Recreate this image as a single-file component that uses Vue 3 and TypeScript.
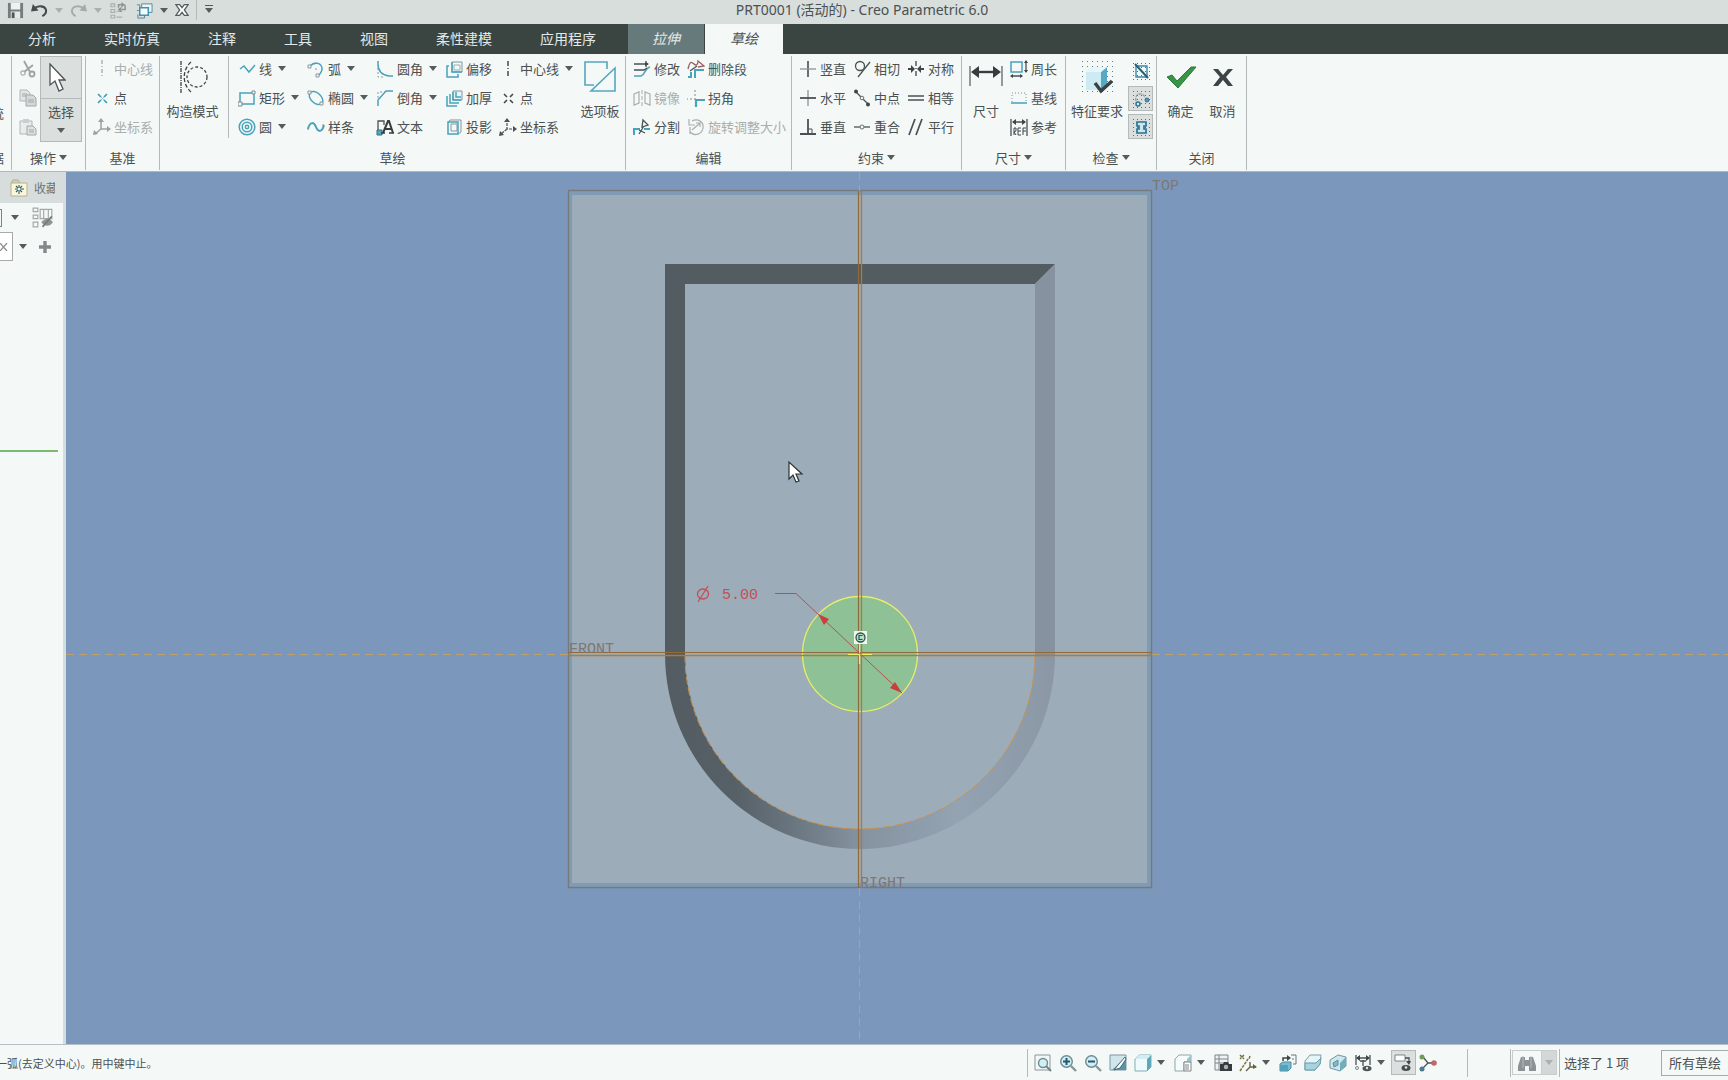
<script setup lang="ts">
interface Command {
  icon: string
  label: string
  menu?: boolean
  disabled?: boolean
}

const T = 'stroke="#48a3bc" fill="none" stroke-width="1.5"'
const D = 'stroke="#4a5254" fill="none" stroke-width="1.3"'
const G = 'stroke="#a9afaf" fill="none" stroke-width="1.2"'
const lens = '<path d="M12 12l5 5" stroke="#8b9598" stroke-width="2.4"/><circle cx="7.500" cy="7.500" r="5.800" fill="#d3eef2" stroke="#6d8b94" stroke-width="1.4"/>'
const dots = '<path d="M1 1.500h17M1 5.500h17M1 9.500h17M1 13.500h17M1 17.500h17" stroke="#3d7493" stroke-width="1" stroke-dasharray="1 3"/>'

/* Glyph bodies, drawn on an 18 by 18 grid */
const icons: Record<string, string> = {
  save: `<path d="M1 1h16v16h-16z" fill="#747c7d"/><path d="M4 1h10v7h-10z" fill="#eef1f0"/><path d="M4 10h10v7h-10z" fill="#e4e9e8"/><path d="M5 11h3v6h-3z" fill="#4e5657"/>`,
  undo: `<path d="M3 7c5-4 12-3 13 2c0 3-2 5-4 6" fill="none" stroke="#444b4c" stroke-width="2.2"/><path d="M0 10l2-8 6 7z" fill="#444b4c"/>`,
  redo: `<path d="M15 7c-5-4-12-3-13 2c0 3 2 5 4 6" fill="none" stroke="#a4abaa" stroke-width="2"/><path d="M18 10l-2-8-6 7z" fill="#a4abaa"/>`,
  regen: `<path d="M1 2h4v3h-4zM1 8h4v3h-4zM1 14h4v3h-4zM7 16h6M7 10h6" ${G}/><path d="M9 6v-3h4M16 3v5h-4" stroke="#8e9595" stroke-width="1.6" fill="none"/><path d="M12 0l4 3-4 3zM12 5v6l-4-3z" fill="#8e9595"/>`,
  windows: `<path d="M6 2h11v9h-11z" fill="#eaf5f8" stroke="#56869a"/><path d="M1 3h3v4M1 9h2" fill="none" stroke="#56869a"/><path d="M4 6h9v8h-9z" fill="#fff" stroke="#3c93b2" stroke-width="1.6"/><path d="M9 14v3h-7v-4" fill="none" stroke="#56869a"/>`,
  closeWin: `<path d="M1 2h5l3 4 3-4h5l-5 7 5 7h-5l-3-4-3 4h-5l5-7z" fill="#fff" stroke="#555d5e" stroke-width="1.7"/>`,
  cut: `<path d="M5 1l6 11M14 5l-9 7" stroke="#9da3a3" stroke-width="1.8"/><circle cx="4" cy="13" r="2.200" ${G}/><circle cx="13" cy="14" r="2.500" stroke="#9da3a3" stroke-width="1.8" fill="none"/>`,
  copy: `<path d="M1 1h7l3 3v8h-10z" fill="#e1e5e5" stroke="#b1b7b7"/><path d="M7 6h7l3 3v8h-10z" fill="#d3d8d8" stroke="#a2a8a8"/><path d="M9 11h6M9 13h6M3 5h5M3 7h4" stroke="#a2a8a8"/>`,
  paste: `<path d="M1 3h12v13h-12z" fill="#e9ecec" stroke="#b1b7b7"/><path d="M4 1h6v4h-6z" fill="#c9cece"/><path d="M8 8h6l3 3v6h-9z" fill="#dde1e1" stroke="#a2a8a8"/><path d="M10 12h5M10 14h5" stroke="#a2a8a8"/>`,
  axisOff: `<path d="M9 0v18" stroke="#a9afaf" stroke-width="1.4" stroke-dasharray="4 2 1 2"/>`,
  point: `<path d="M5 5l3 3M11 11l3 3M14 5l-3 3M8 11l-3 3" stroke="#3f9ab4" stroke-width="1.6"/><path d="M8 8l3 3M11 8l-3 3" stroke="#8fc3d1"/>`,
  csysOff: `<path d="M8 1v10h9M8 11l-6 5" stroke="#9ba1a1" fill="none" stroke-width="1.5"/><path d="M8 0l3 4h-6zM18 11l-4-3v6zM0 17l1-5 4 4z" fill="#9ba1a1"/>`,
  line: `<path d="M2 9l4-3 5 6 6-7" ${T}/>`,
  rect: `<path d="M2 4h14v11h-14z" ${T}/><path d="M0 13h4v4h-4zM14 2h3v3h-3z" fill="#f4f8f7" stroke="#7f8a8d"/>`,
  circle: `<circle cx="9" cy="9" r="7.800" ${T}/><circle cx="9" cy="9" r="4.800" ${T}/><circle cx="9" cy="9" r="1.700" ${T}/>`,
  arc: `<path d="M3 6c5-5 12-3 12 3c0 3-2 5-4 7" ${T}/><path d="M1 5h3v3h-3zM9 14h3v3h-3zM8 9h2" stroke="#8c979a" fill="#f4f8f7"/>`,
  ellipse: `<ellipse cx="9" cy="9" rx="8" ry="5" transform="rotate(42 9 9)" ${T}/><path d="M1 2h3v3h-3zM13 13h3v3h-3z" fill="#f4f8f7" stroke="#8c979a"/>`,
  spline: `<path d="M1 11c2-8 6-7 8-2s6 6 8-2" stroke="#48a3bc" fill="none" stroke-width="2"/><path d="M1 9v3M16 6v3" stroke="#8c979a"/>`,
  fillet: `<path d="M2 1v3c0 7 4 11 11 12h4" ${T}/><path d="M2 8v9h7" fill="none" stroke="#8c979a" stroke-dasharray="2 2"/>`,
  chamfer: `<path d="M17 2h-7l-8 9v6" ${T}/><path d="M2 9v-6h7" fill="none" stroke="#8c979a" stroke-dasharray="2 2"/>`,
  textTool: `<path d="M2 12v-9h6v4" ${D}/><path d="M1 12h5v5h-5z" fill="#56a9bd" stroke="#346f80"/><path d="M7 15l5-12h1l4 12M9 11h6" stroke="#373e40" stroke-width="2" fill="none"/><path d="M5 15h4M13 15h5" stroke="#373e40" stroke-width="1.5"/>`,
  offset: `<path d="M7 2h10v10h-10z" fill="#f4f8f7" stroke="#7b969f"/><path d="M9 5h6v5h-6z" fill="none" stroke="#9ab0b7"/><path d="M4 6h-2v11h11v-3" ${T}/><path d="M7 2v10h10" ${T}/>`,
  thicken: `<path d="M8 2h9v9h-9z" fill="#e8f4f6" stroke="#7b969f"/><path d="M5 5v9h9M11 3v5h5M2 7v10h10" ${T}/><path d="M8 3v8h8" ${T}/>`,
  project: `<path d="M3 4h10v12h-10z" ${T}/><path d="M3 4l2-2h11v12l-3 2M6 6h6v7h-6z" fill="none" stroke="#87979c"/>`,
  axis: `<path d="M9 1v17" stroke="#42494b" stroke-width="1.5" stroke-dasharray="5 2 1 2"/>`,
  pointDark: `<path d="M5 5l3 3M11 11l3 3M14 5l-3 3M8 11l-3 3" stroke="#42494b" stroke-width="1.6"/>`,
  csys: `<path d="M8 1v10h9M8 11l-6 5" stroke="#4a5254" fill="none" stroke-width="1.2" stroke-dasharray="3 1"/><path d="M8 0l3 4h-6zM18 11l-4-3v6zM0 18l1-5 4 4z" fill="#4a5254"/>`,
  modify: `<path d="M1 4h14M13 1v6" ${D}/><path d="M17 7c-5 1-5 8-9 9h-7" ${T}/><path d="M1 10h10l3-2" ${D}/><path d="M16 4l-4-2v4z" fill="#3f4648"/>`,
  mirror: `<path d="M9 1v16" stroke="#a9afaf" stroke-dasharray="4 2"/><path d="M1 5l5-2v11l-5 2zM17 5l-5-2v11l5 2z" ${G}/>`,
  divide: `<path d="M1 17v-6h6M11 11h6" stroke="#48a3bc" fill="none" stroke-width="2"/><path d="M10 2l5 5-6 2zM11 8l-5 8M6 12l6 3" ${D}/>`,
  deleteSeg: `<path d="M1 9c2-9 4-7 6-5s4 1 4-3l6 5-6 1" stroke="#986064" fill="none" stroke-width="1.3"/><path d="M8 18v-8h9M1 17h3v-5" stroke="#48a3bc" fill="none" stroke-width="2"/><path d="M3 11l7-5" ${D}/>`,
  corner: `<path d="M8 1v9h-8" stroke="#7f8c8f" fill="none" stroke-dasharray="2 2"/><path d="M9 18v-7h9" stroke="#48a3bc" fill="none" stroke-width="2.2"/>`,
  rotate: `<path d="M5 3c6-3 12 1 11 7s-8 9-13 4M2 1v6h6M3 9v7" ${G}/><path d="M5 12l8-7M9 5h4v4" ${G}/>`,
  vertical: `<path d="M9 1v16" stroke="#596163" stroke-width="1.8"/><path d="M1 9h16" stroke="#8c9496" stroke-width="1.3"/>`,
  horizontal: `<path d="M9 1v16" stroke="#8c9496" stroke-width="1.3"/><path d="M1 9h16" stroke="#4a5254" stroke-width="1.8"/>`,
  perp: `<path d="M1 16h16M9 1v15" stroke="#4a5254" stroke-width="1.8"/><path d="M9 11h4v5" fill="none" stroke="#4a5254"/>`,
  tangent: `<circle cx="7" cy="6" r="4.500" ${D}/><path d="M5 17l12-15" ${D}/>`,
  midpoint: `<path d="M3 3l12 12" ${D}/><circle cx="3" cy="2.500" r="2" fill="#3f4648"/><circle cx="15" cy="15.500" r="2" fill="#3f4648"/><circle cx="9" cy="9" r="1.800" fill="#f4f8f7" stroke="#677072"/>`,
  coincident: `<path d="M1 9h16" ${D}/><circle cx="9" cy="9" r="2" fill="#f4f8f7" stroke="#677072"/>`,
  symmetric: `<path d="M9 1v17" stroke="#4a5254" stroke-width="1.4" stroke-dasharray="5 2 1 2"/><path d="M1 9h4M17 9h-4" stroke="#3f4648" stroke-width="1.8"/><path d="M8 9l-4-4v8zM10 9l4-4v8z" fill="#3f4648"/>`,
  equal: `<path d="M1 7h16M1 11h16" stroke="#4a5254" stroke-width="1.7"/>`,
  parallel: `<path d="M2 17l6-16M9 17l6-16" stroke="#4a5254" stroke-width="1.7"/>`,
  perimeter: `<path d="M1 2h11v10h-11z" ${T}/><path d="M16 1v11M1 16h11" ${D}/><path d="M16 0l2 3h-4zM16 13l2-3h-4zM0 16l3-2v4zM13 16l-3-2v4z" fill="#3f4648"/>`,
  baseline: `<path d="M2 13v-9h14v9" fill="none" stroke="#7f9299" stroke-dasharray="1 2"/><path d="M1 14h16" stroke="#65aec2" stroke-width="1.8"/>`,
  refDim: `<path d="M1 1v17M17 1v17M3 4h12" ${D}/><path d="M2 4l4-3v6zM16 4l-4-3v6z" fill="#3f4648"/><path d="M4 17v-7h2v3l-2 1 2 3M11 10h-3v7h3M8 13h3M13 17v-7h3M13 13h3" fill="none" stroke="#3f4648"/>`,
  overlap: `${dots}<path d="M4 4v11h11M4 4h11v11" fill="none" stroke="#398aa6" stroke-width="1.4"/><path d="M3 2l13 14" stroke="#285e78" stroke-width="2"/>`,
  openEnds: `${dots}<path d="M4 11c-2-9 8-9 9-3" fill="none" stroke="#87979c" stroke-width="1.2" stroke-dasharray="3 1"/><circle cx="6" cy="14" r="2" fill="#dceff4" stroke="#2d7290" stroke-width="1.5"/><circle cx="15" cy="10" r="2" fill="#5397ac" stroke="#2d7290"/>`,
  shade: `${dots}<path d="M5 4h9v4h-2v3h2v4h-9v-4h2v-3h-2z" fill="#c5e7ed" stroke="#2d7290" stroke-width="1.7"/>`,
  zoomFit: `<path d="M1 1h15v15h-15z" fill="#f2f7f7" stroke="#8b9699"/><path d="M12 12l5 5" stroke="#6f8188" stroke-width="2"/><circle cx="9" cy="9" r="4.500" fill="#d3eef2" stroke="#6d8b94" stroke-width="1.4"/>`,
  zoomIn: `${lens}<path d="M4 7.500h7M7.500 4v7" stroke="#205b70" stroke-width="2"/>`,
  zoomOut: `${lens}<path d="M4 7.500h7" stroke="#205b70" stroke-width="2"/>`,
  repaint: `<path d="M1 1h16v15h-16z" fill="#cfe7ec" stroke="#7d979f"/><path d="M17 3v13h-14z" fill="#5795aa"/><path d="M16 3l-7 8-4 5 6-2 6-9z" fill="#fff" stroke="#4b6670"/>`,
  cube: `<path d="M1 5l4-4h12v12l-4 4h-12z" fill="#eefafb" stroke="#7faeb9"/><path d="M13 5l4-4v12l-4 4z" fill="#5da9b9"/><path d="M1 5l4-4h12l-4 4z" fill="#d3edf1"/>`,
  views: `<path d="M1 5l4-4h12v7h-7v9h-9z" fill="#f6fbfb" stroke="#8fa4a9"/><path d="M13 5l4-4v6h-4z" fill="#9bc5cd"/><path d="M10 8h7v9h-7z" fill="#fff" stroke="#7b8588"/><path d="M12 10v6M14 10v6" stroke="#7b8588"/>`,
  viewMgr: `<path d="M1 1h13v15h-13z" fill="#eef2f1" stroke="#7b8588"/><path d="M1 5h13M1 9h13M5 1v15" stroke="#7b8588"/><path d="M6 10h3l1-2h4l1 2h3v7h-12z" fill="#363c3d"/><circle cx="12" cy="13" r="2.200" fill="#aeb5b6"/>`,
  datums: `<path d="M1 1l4 4M5 1l-4 4M1 17l8-12M11 2l-1 3" stroke="#7d7349" stroke-width="1.5" stroke-dasharray="3 1"/><path d="M11 8v5h6M11 13l-4 4" fill="none" stroke="#66613f" stroke-width="1.4"/><path d="M18 13l-4-3v5z" fill="#66613f"/>`,
  sketchView: `<path d="M1 10l3-2h8v6l-3 3h-8z" fill="#78bccf" stroke="#4b8ea2"/><path d="M1 11h8v6h-8z" fill="#54a1b9"/><path d="M4 7v-3h5" fill="none" stroke="#3f4648" stroke-width="1.5"/><path d="M8 1l4 3-4 3z" fill="#3f4648"/><path d="M12 1h5v9h-3M13 5h2" fill="none" stroke="#697679"/>`,
  clip: `<path d="M1 7l5-6h11l-1 9-5 6h-10z" fill="#e3f5f8" stroke="#7f9fa7"/><path d="M1 9h11l5-5-1 6-5 6h-10z" fill="#a5d3df" stroke="#6d9ba8"/>`,
  clip3d: `<path d="M1 6l8-5 8 2v9l-6 5-10-3z" fill="#cde9ee" stroke="#71969f"/><path d="M11 9l6-6v9l-6 5z" fill="#70aebd"/><path d="M4 9l5-3v5l-4 2z" fill="#86b9c5" stroke="#5f8d99"/>`,
  dimShow: `<path d="M2 1v10M16 1v10M3 4h12M9 6v6M6 7h6" ${D}/><path d="M2 4l4-3v6zM16 4l-4-3v6z" fill="#3f4648"/><circle cx="3" cy="14" r="1.500" fill="none" stroke="#7b8588"/><ellipse cx="13" cy="14.500" rx="4.500" ry="2.800" fill="#4f5658"/><circle cx="13" cy="14" r="1.200" fill="#dfe4e4"/>`,
  constraintShow: `<path d="M1 1h10v6h-10z" fill="#fff" stroke="#7b8588"/><path d="M11 4h4v5" ${D}/><path d="M15 11l-3-4h5z" fill="#3f4648"/><ellipse cx="12" cy="14" rx="4.500" ry="3" fill="#454c4d"/><circle cx="12" cy="13.500" r="1.300" fill="#dfe4e4"/>`,
  spin: `<path d="M4 3l5 6-6 6M9 9h6" ${D}/><circle cx="3" cy="3" r="2.500" fill="#709c57"/><circle cx="3" cy="15" r="2.500" fill="#50788f"/><circle cx="15" cy="9" r="2.800" fill="#c0696b"/>`,
  binoculars: `<path d="M3 3h4v3h4v-3h4l3 9v5h-7v-5h-4v5h-7v-5z" fill="#8d9394"/><path d="M5 2v12M13 2v12" stroke="#b7bcbc"/>`,
  favorites: `<path d="M1 4l2-3h5l2 3" fill="#d3d0bb" stroke="#b1ab8d"/><path d="M1 4h16v13h-16z" fill="#fbf5d9" stroke="#b9b18e"/><path d="M9 6v9M5 10h9M6 7l6 6M12 7l-6 6" stroke="#285c6b" stroke-width="1.1"/><circle cx="9" cy="10" r="1.500" fill="#fbf5d9"/>`,
  treeFilter: `<path d="M1 1h4v3h-4zM1 7h4v3h-4zM1 13h4v4h-4zM7 2h10v8h-10zM10 2v8M14 2v8" fill="none" stroke="#a2a9a9"/><path d="M8 13c3-4 7-4 10 0c-3 4-7 4-10 0z" fill="#8d9595"/><path d="M9 17l8-9" stroke="#747c7c" stroke-width="1.4"/>`,
  plus: `<path d="M9 3v12M3 9h12" stroke="#83898a" stroke-width="3.4"/>`,
}

const tabs: string[] = ['分析', '实时仿真', '注释', '工具', '视图', '柔性建模', '应用程序']

const clipboard: Command[] = [
  { icon: 'cut', label: '剪切' },
  { icon: 'copy', label: '复制' },
  { icon: 'paste', label: '粘贴' },
]
const datum: Command[] = [
  { icon: 'axisOff', label: '中心线', disabled: true },
  { icon: 'point', label: '点' },
  { icon: 'csysOff', label: '坐标系', disabled: true },
]
const sketch: Command[] = [
  { icon: 'line', label: '线', menu: true },
  { icon: 'rect', label: '矩形', menu: true },
  { icon: 'circle', label: '圆', menu: true },
  { icon: 'arc', label: '弧', menu: true },
  { icon: 'ellipse', label: '椭圆', menu: true },
  { icon: 'spline', label: '样条' },
  { icon: 'fillet', label: '圆角', menu: true },
  { icon: 'chamfer', label: '倒角', menu: true },
  { icon: 'textTool', label: '文本' },
  { icon: 'offset', label: '偏移' },
  { icon: 'thicken', label: '加厚' },
  { icon: 'project', label: '投影' },
  { icon: 'axis', label: '中心线', menu: true },
  { icon: 'pointDark', label: '点' },
  { icon: 'csys', label: '坐标系' },
]
const edit: Command[] = [
  { icon: 'modify', label: '修改' },
  { icon: 'mirror', label: '镜像', disabled: true },
  { icon: 'divide', label: '分割' },
  { icon: 'deleteSeg', label: '删除段' },
  { icon: 'corner', label: '拐角' },
  { icon: 'rotate', label: '旋转调整大小', disabled: true },
]
const constrain: Command[] = [
  { icon: 'vertical', label: '竖直' },
  { icon: 'horizontal', label: '水平' },
  { icon: 'perp', label: '垂直' },
  { icon: 'tangent', label: '相切' },
  { icon: 'midpoint', label: '中点' },
  { icon: 'coincident', label: '重合' },
  { icon: 'symmetric', label: '对称' },
  { icon: 'equal', label: '相等' },
  { icon: 'parallel', label: '平行' },
]
const dimension: Command[] = [
  { icon: 'perimeter', label: '周长' },
  { icon: 'baseline', label: '基线' },
  { icon: 'refDim', label: '参考' },
]
const inspect = [
  { icon: 'overlap', label: '重叠几何', on: false },
  { icon: 'openEnds', label: '突出显示开放端', on: true },
  { icon: 'shade', label: '着色封闭环', on: true },
]
const viewTools: Array<Command & { on?: boolean }> = [
  { icon: 'zoomFit', label: '重新调整' },
  { icon: 'zoomIn', label: '放大' },
  { icon: 'zoomOut', label: '缩小' },
  { icon: 'repaint', label: '重画' },
  { icon: 'cube', label: '显示样式', menu: true },
  { icon: 'views', label: '已保存方向', menu: true },
  { icon: 'viewMgr', label: '视图管理器' },
  { icon: 'datums', label: '基准显示过滤器', menu: true },
  { icon: 'sketchView', label: '草绘视图' },
  { icon: 'clip', label: '修剪模型' },
  { icon: 'clip3d', label: '截面' },
  { icon: 'dimShow', label: '草绘器显示过滤器', menu: true },
  { icon: 'constraintShow', label: '注释显示', on: true },
  { icon: 'spin', label: '旋转中心' },
]
</script>

<template>
  <div class="app">
    <header class="title-bar">
      <div class="quick">
        <button aria-label="保存"><svg class="ico" viewBox="0 0 18 18" v-html="icons.save" /></button>
        <button class="split" aria-label="撤消"><svg class="ico" viewBox="0 0 18 18" v-html="icons.undo" /><i class="caret pale" /></button>
        <button class="split" aria-label="重做"><svg class="ico" viewBox="0 0 18 18" v-html="icons.redo" /><i class="caret pale" /></button>
        <button class="regen" aria-label="重新生成"><svg class="ico" viewBox="0 0 18 18" v-html="icons.regen" /></button>
        <button class="split" aria-label="窗口"><svg class="ico" viewBox="0 0 18 18" v-html="icons.windows" /><i class="caret" /></button>
        <button class="close" aria-label="关闭"><svg class="ico" viewBox="0 0 18 18" v-html="icons.closeWin" /></button>
        <button class="more" aria-label="自定义快速访问工具栏"><i class="caret barred" /></button>
      </div>
      <h1>PRT0001 (活动的) - Creo Parametric 6.0</h1>
    </header>

    <nav class="tabs">
      <button v-for="t in tabs" :key="t">{{ t }}</button>
      <button class="context">拉伸</button>
      <button class="context active">草绘</button>
    </nav>

    <div class="ribbon">
      <section class="group cut-off">
        <div class="body"><span>文件系统</span></div>
        <div class="caption">获取数据</div>
      </section>

      <section class="group operate">
        <div class="body">
          <div class="stack clip">
            <button v-for="c in clipboard" :key="c.icon" class="cmd" :aria-label="c.label">
              <svg class="ico" viewBox="0 0 18 18" v-html="icons[c.icon]" />
            </button>
          </div>
          <button class="select-btn">
            <span class="top">
              <svg width="18" height="30" viewBox="0 0 18 30"><path d="M2 1v21l5-4 4 10 4-2-4-9h6z" fill="#fff" stroke="#4d5455" stroke-width="1.3" /></svg>
            </span>
            <span class="bottom">选择<i class="caret" /></span>
          </button>
        </div>
        <button class="caption">操作<i class="caret" /></button>
      </section>

      <section class="group datum">
        <div class="body">
          <div class="stack">
            <button v-for="c in datum" :key="c.label" class="cmd" :disabled="c.disabled">
              <svg class="ico" viewBox="0 0 18 18" v-html="icons[c.icon]" />{{ c.label }}
            </button>
          </div>
        </div>
        <div class="caption">基准</div>
      </section>

      <section class="group sketch">
        <div class="body">
          <button class="big mode">
            <svg width="32" height="34" viewBox="0 0 32 34" fill="none" stroke="#3d4446" stroke-width="1.3">
              <path d="M4 1v32" stroke-dasharray="4 1 1 1" /><path d="M14 2c-9 8-9 22 0 30" stroke-dasharray="4 2" /><circle cx="20" cy="17" r="10" stroke-dasharray="3 2" />
            </svg>
            构造模式
          </button>
          <div class="stack five">
            <button v-for="(c, i) in sketch" :key="i" class="cmd">
              <svg class="ico" viewBox="0 0 18 18" v-html="icons[c.icon]" />{{ c.label }}<i v-if="c.menu" class="caret" />
            </button>
          </div>
          <button class="big palette">
            <svg width="34" height="34" viewBox="0 0 34 34" fill="none" stroke="#55a7bd" stroke-width="1.6">
              <path d="M24 9v-7h-22v23h9" /><path d="M32 8v23h-24z" fill="#f4f8f7" />
            </svg>
            选项板
          </button>
        </div>
        <div class="caption">草绘</div>
      </section>

      <section class="group edit">
        <div class="body">
          <div class="stack two">
            <button v-for="c in edit" :key="c.label" class="cmd" :disabled="c.disabled">
              <svg class="ico" viewBox="0 0 18 18" v-html="icons[c.icon]" />{{ c.label }}
            </button>
          </div>
        </div>
        <div class="caption">编辑</div>
      </section>

      <section class="group constrain">
        <div class="body">
          <div class="stack three">
            <button v-for="c in constrain" :key="c.label" class="cmd">
              <svg class="ico" viewBox="0 0 18 18" v-html="icons[c.icon]" />{{ c.label }}
            </button>
          </div>
        </div>
        <button class="caption">约束<i class="caret" /></button>
      </section>

      <section class="group dims">
        <div class="body">
          <button class="big">
            <svg width="36" height="34" viewBox="0 0 36 34">
              <path d="M2 6v20M34 6v20" stroke="#7b8385" stroke-width="1.6" /><path d="M6 12h24" stroke="#363d3f" stroke-width="2.400" /><path d="M3 12l8-6v12zM33 12l-8-6v12z" fill="#363d3f" />
            </svg>
            尺寸
          </button>
          <div class="stack">
            <button v-for="c in dimension" :key="c.label" class="cmd">
              <svg class="ico" viewBox="0 0 18 18" v-html="icons[c.icon]" />{{ c.label }}
            </button>
          </div>
        </div>
        <button class="caption">尺寸<i class="caret" /></button>
      </section>

      <section class="group inspect">
        <div class="body">
          <button class="big">
            <svg width="34" height="34" viewBox="0 0 34 34">
              <path d="M2 1.500h31M2 6.500h31M2 11.500h31M2 16.500h31M2 21.500h31M2 26.500h31M2 31.500h31" stroke="#5b8094" stroke-dasharray="1 4" />
              <path d="M6 12l6-5h15v17l-6 6h-15z" fill="#cdebf2" /><path d="M21 12l6-5v17l-6 6z" fill="#57a8c2" /><path d="M6 12l6-5h15l-6 5z" fill="#e6f6f9" />
              <path d="M15 23l6 8 11-10" fill="none" stroke="#394143" stroke-width="3.400" />
            </svg>
            特征要求
          </button>
          <div class="toggles">
            <button v-for="t in inspect" :key="t.icon" :class="{ on: t.on }" :aria-label="t.label" :aria-pressed="t.on">
              <svg class="ico" viewBox="0 0 18 18" v-html="icons[t.icon]" />
            </button>
          </div>
        </div>
        <button class="caption">检查<i class="caret" /></button>
      </section>

      <section class="group finish">
        <div class="body">
          <button class="big">
            <svg width="32" height="34" viewBox="0 0 32 34"><path d="M2 17l5-2 5 6 14-14h5l-18 21z" fill="#3a9445" stroke="#2c7b37" /></svg>
            确定
          </button>
          <button class="big">
            <svg width="32" height="34" viewBox="0 0 32 34"><path d="M6 9h5l5 6 5-6h5l-7 8 7 9h-5l-5-6-5 6h-5l7-9z" fill="#3d4446" /></svg>
            取消
          </button>
        </div>
        <div class="caption">关闭</div>
      </section>
    </div>

    <main class="work">
      <aside class="navigator">
        <div class="nav-tab">
          <svg class="ico" viewBox="0 0 18 18" v-html="icons.favorites" /><span>收藏</span>
        </div>
        <div class="nav-row">
          <i class="stub" /><button aria-label="设置"><i class="caret" /></button>
          <button class="filter" aria-label="树过滤器"><svg class="ico wide" viewBox="0 0 18 18" v-html="icons.treeFilter" /></button>
        </div>
        <div class="nav-row">
          <button class="clear" aria-label="清除"><svg width="8" height="8" viewBox="0 0 8 8"><path d="M0 0l7 8M7 0l-7 8" stroke="#8b9191" stroke-width="1.3" /></svg></button>
          <button aria-label="搜索选项"><i class="caret" /></button>
          <button class="add" aria-label="添加"><svg class="ico" viewBox="0 0 18 18" v-html="icons.plus" /></button>
        </div>
        <div class="insert-line" />
      </aside>

      <svg class="scene" viewBox="66 172 1662 872" preserveAspectRatio="xMidYMid slice">
        <defs>
          <linearGradient id="wall" gradientUnits="userSpaceOnUse" x1="664" y1="0" x2="1055" y2="0">
            <stop offset="0" stop-color="#525c61" /><stop offset="0.18" stop-color="#566067" />
            <stop offset="0.34" stop-color="#6b7781" /><stop offset="0.5" stop-color="#8592a0" />
            <stop offset="0.75" stop-color="#93a3b2" /><stop offset="1" stop-color="#8b97a5" />
          </linearGradient>
        </defs>
        <rect x="568" y="191" width="583" height="697" fill="#809bb4" />
        <rect x="572" y="195" width="575" height="688" fill="#9dacb9" />
        <rect x="568.500" y="190.500" width="583" height="697" fill="none" stroke="#77797a" stroke-width="1.400" />

        <path d="M665 654a195 195 0 0 0 390 0h-20a175 175 0 0 1-350 0z" fill="url(#wall)" />
        <path d="M665 264h390l-20 20h-350v371h-20z" fill="#525c61" />
        <path d="M1055 264v391h-20v-371z" fill="#8792a0" />
        <path d="M685 655a175 174 0 0 0 350 0" fill="none" stroke="#cb924a" stroke-dasharray="8 3" />

        <circle cx="860" cy="654" r="57.500" fill="#8fc197" stroke="#e9ef63" stroke-width="1.300" />

        <g stroke="#bda06a" stroke-dasharray="8 5">
          <path d="M66 654.500h502M1152 654.500h576M859.500 888v156M859.500 172v19" />
        </g>
        <path d="M568 652.500h584M858.500 191v697" stroke="#8f6a3c" stroke-width="1.200" />
        <path d="M568 655.500h584M861.500 191v697" stroke="#b5792e" stroke-width="1.300" />
        <path d="M848 654.500h24M859.500 643v21" stroke="#e9ef63" stroke-width="1.200" />

        <path d="M775 593.500h21l106 99.500" stroke="#b5524e" fill="none" />
        <path d="M818 614l11 5-5 6zM902 693l-12-5 5-6z" fill="#c8403c" />

        <rect x="854" y="631" width="13" height="13" fill="#eef8e2" />
        <circle cx="860.500" cy="637.500" r="4.500" fill="#b9e0c4" stroke="#25505b" stroke-width="1.300" />
        <path d="M862.500 635.500h-3.500v4h3.500" fill="none" stroke="#25505b" stroke-width="1.200" />

        <g class="tag">
          <text x="569" y="653">FRONT</text>
          <text x="1152" y="190">TOP</text>
          <text x="860" y="887">RIGHT</text>
        </g>
        <g class="value">
          <text x="722" y="599">5.00</text>
        </g>
        <g fill="none" stroke="#c24f57" stroke-width="1.300">
          <ellipse cx="703" cy="594" rx="5.500" ry="5" /><path d="M698 602l10-16" />
        </g>
        <path d="M789 462v17l4-4 3 7 3-1-3-7h6z" fill="#fff" stroke="#2b3133" stroke-width="1.200" />
      </svg>
    </main>

    <footer class="status">
      <p>一弧(去定义中心)。用中键中止。</p>
      <div class="view-tools">
        <button v-for="v in viewTools" :key="v.icon" :class="{ menu: v.menu, on: v.on }" :aria-label="v.label">
          <svg class="ico" viewBox="0 0 18 18" v-html="icons[v.icon]" /><i v-if="v.menu" class="caret" />
        </button>
      </div>
      <div class="spacer" />
      <div class="find">
        <button aria-label="查找"><svg class="ico" viewBox="0 0 18 18" v-html="icons.binoculars" /></button>
        <button class="drop" aria-label="查找选项"><i class="caret pale" /></button>
      </div>
      <output>选择了 1 项</output>
      <select aria-label="选择过滤器"><option>所有草绘</option></select>
    </footer>
  </div>
</template>

<style>
body {
  margin: 0;
  overflow: hidden;
}
</style>

<style scoped>
.app {
  display: grid;
  grid-template-rows: 24px 30px 118px minmax(0, 1fr) 36px;
  height: 100vh;
  overflow: hidden;
  background: #f4f8f7;
  color: #4b5152;
  font: 13px/18px "Noto Sans CJK SC", sans-serif;
}
button {
  display: flex;
  align-items: center;
  margin: 0;
  padding: 0;
  border: 0;
  background: none;
  color: inherit;
  font: inherit;
  white-space: nowrap;
}
button:disabled {
  color: #a9afaf;
}
.ico {
  display: block;
  flex: none;
  width: 18px;
  height: 18px;
}
.caret {
  flex: none;
  width: 0;
  height: 0;
  border: 4px solid transparent;
  border-top: 5px solid #555c5d;
  border-bottom: 0;
}
.caret.pale {
  border-top-color: #a9b0af;
}

/* Title bar */
.title-bar {
  display: grid;
  grid-template-columns: 1fr auto 1fr;
  align-items: center;
  padding-right: 4px;
  background: #d8dedc;
}
.title-bar h1 {
  margin: 0;
  height: 20px;
  padding-bottom: 4px;
  font: 14px/20px "Noto Sans", "Noto Sans CJK SC", sans-serif;
}
.quick {
  display: flex;
  align-items: center;
  height: 20px;
  padding-left: 7px;
  gap: 7px;
  margin-bottom: 4px;
}
.quick .ico {
  width: 17px;
  height: 17px;
}
.quick .split {
  gap: 7px;
}
.quick .regen {
  margin: 0 2px 0 1px;
}
.quick .close .ico {
  width: 14px;
  height: 14px;
}
.more {
  height: 20px;
  padding-left: 8px;
  border-left: 1px solid #b2b9b7;
}
.caret.barred {
  position: relative;
}
.caret.barred::before {
  content: "";
  position: absolute;
  top: -8px;
  left: -4px;
  width: 8px;
  height: 1px;
  background: #555c5d;
}

/* Tabs */
.tabs {
  display: flex;
  padding-left: 4px;
  background: #3a4542;
  color: #e4e9e8;
  font-size: 14px;
}
.tabs button {
  padding: 0 24px 2px;
}
.tabs .context {
  justify-content: center;
  width: 76px;
  margin-left: 8px;
  padding: 0 0 2px;
  background: #66797b;
  font-style: italic;
}
.tabs .context.active {
  width: 78px;
  margin-left: 1px;
  background: #f4f8f7;
  color: #4b5152;
}

/* Ribbon */
.ribbon {
  display: flex;
  padding: 2px 0 1px;
  border-bottom: 1px solid #aab8c4;
  box-sizing: border-box;
}
.group {
  display: flex;
  flex: none;
  flex-direction: column;
  box-sizing: border-box;
  border-right: 1px solid #b4baba;
}
.body {
  display: flex;
  height: 87px;
}
.caption {
  display: flex;
  flex: 1;
  align-items: center;
  justify-content: center;
  gap: 3px;
  padding-top: 2px;
}
.stack {
  display: grid;
  grid-template-rows: repeat(3, 29px);
  grid-auto-flow: column;
  padding-left: 7px;
}
.stack.two {
  grid-template-columns: 54px 96px;
}
.stack.three {
  grid-template-columns: repeat(3, 54px);
}
.stack.five {
  grid-template-columns: 69px 69px 69px 54px 79px;
  padding-left: 9px;
}
.cmd {
  height: 25px;
  gap: 3px;
}
.cmd .caret {
  margin-left: 3px;
}
.big {
  flex-direction: column;
  gap: 8px;
  height: 87px;
  padding-top: 4px;
}
.cut-off {
  align-items: flex-end;
  width: 12px;
  padding-right: 7px;
  overflow: hidden;
  white-space: nowrap;
}
.cut-off .body {
  align-items: center;
  box-sizing: border-box;
  padding-top: 26px;
}
.cut-off .body,
.cut-off .caption {
  justify-content: flex-end;
}
.operate {
  width: 74px;
}
.clip {
  width: 21px;
}
.select-btn {
  flex-direction: column;
  box-sizing: border-box;
  width: 42px;
  height: 86px;
  border: 1px solid #b4bab9;
  background: #dbdfde;
}
.select-btn .top {
  display: flex;
  align-items: center;
  justify-content: center;
  width: 100%;
  height: 42px;
  padding-right: 8px;
  box-sizing: border-box;
  border-bottom: 1px solid #b4bab9;
}
.select-btn .bottom {
  display: flex;
  flex-direction: column;
  align-items: center;
  gap: 7px;
  padding-top: 4px;
}
.datum {
  width: 74px;
}
.sketch {
  width: 466px;
}
.mode {
  box-sizing: border-box;
  width: 69px;
  height: 82px;
  padding-right: 3px;
  border-right: 1px solid #b4baba;
}
.palette {
  width: 44px;
}
.edit {
  width: 166px;
}
.constrain {
  width: 170px;
}
.dims {
  width: 104px;
}
.dims .big {
  width: 48px;
}
.dims .stack {
  padding-left: 0;
}
.inspect {
  width: 91px;
}
.inspect .big {
  width: 62px;
}
.toggles {
  display: flex;
  flex-direction: column;
  gap: 3px;
  padding-top: 2px;
}
.toggles button {
  justify-content: center;
  box-sizing: border-box;
  width: 25px;
  height: 25px;
  border: 1px solid transparent;
}
.on {
  background: #dbdfde;
}
.toggles .on,
.view-tools .on {
  border-color: #b4bab9;
}
.finish {
  width: 90px;
}
.finish .body {
  justify-content: center;
  gap: 10px;
}

/* Work area */
.work {
  display: grid;
  grid-template-columns: 66px minmax(0, 1fr);
  min-height: 0;
}
.navigator {
  border-right: 3px solid #d3dedf;
  background: #f4f8f7;
}
.nav-tab {
  display: flex;
  align-items: center;
  gap: 6px;
  height: 31px;
  margin-right: -3px;
  padding-left: 10px;
  background: #d7dddc;
}
.nav-tab span {
  width: 21px;
  overflow: hidden;
  white-space: nowrap;
  font-size: 12px;
  color: #6d7474;
}
.nav-row {
  display: flex;
  align-items: center;
  height: 29px;
}
.stub {
  width: 1px;
  height: 16px;
  margin-right: 9px;
  border: 1px solid #7e8585;
  border-left: 0;
}
.filter {
  margin-left: 13px;
}
.wide {
  width: 21px;
  height: 21px;
}
.clear {
  box-sizing: border-box;
  width: 13px;
  height: 29px;
  margin-right: 6px;
  border: 1px solid #a5abab;
  border-left: 0;
  background: #fff;
}
.add {
  margin-left: 9px;
}
.insert-line {
  width: 58px;
  height: 2px;
  margin-top: 189px;
  background: #7cb973;
}
.scene {
  display: block;
  width: 100%;
  height: 100%;
  background: #7b98bc;
}
.tag {
  fill: #7f7774;
  font: 15px "Liberation Mono", monospace;
}
.value {
  fill: #c24f57;
  font: 15px "Liberation Mono", monospace;
}

/* Status bar */
.status {
  display: flex;
  align-items: center;
  box-sizing: border-box;
  border-top: 1px solid #b3bec6;
}
.status p {
  margin: 0 auto 0 -4px;
  font-size: 11px;
}
.view-tools {
  display: flex;
  align-items: center;
  height: 28px;
  padding-left: 3px;
  border-left: 1px solid #b4baba;
}
.view-tools button {
  box-sizing: border-box;
  width: 25px;
  height: 25px;
  padding-left: 2px;
  border: 1px solid transparent;
}
.view-tools .on {
  border-color: #b4bab9;
}
.view-tools .menu {
  width: 40px;
  gap: 5px;
}
.spacer {
  width: 42px;
  height: 28px;
  margin-left: 26px;
  border: 1px solid #b4baba;
  border-width: 0 1px;
}
.find {
  display: flex;
  height: 28px;
  align-items: center;
  padding: 0 2px 0 1px;
  border-right: 1px solid #b4baba;
}
.find button {
  justify-content: center;
  box-sizing: border-box;
  width: 30px;
  height: 25px;
  border: 1px solid #c8cdcd;
}
.find .drop {
  width: 15px;
  border-left: 0;
  background: #d3d7d7;
}
output {
  width: 101px;
  padding-left: 4px;
  box-sizing: border-box;
}
select {
  appearance: none;
  box-sizing: border-box;
  width: 67px;
  height: 26px;
  padding: 0 0 0 7px;
  border: 1px solid #a5abab;
  border-right: 0;
  border-radius: 0;
  background: #f4f8f7;
  color: inherit;
  font: inherit;
}
</style>
